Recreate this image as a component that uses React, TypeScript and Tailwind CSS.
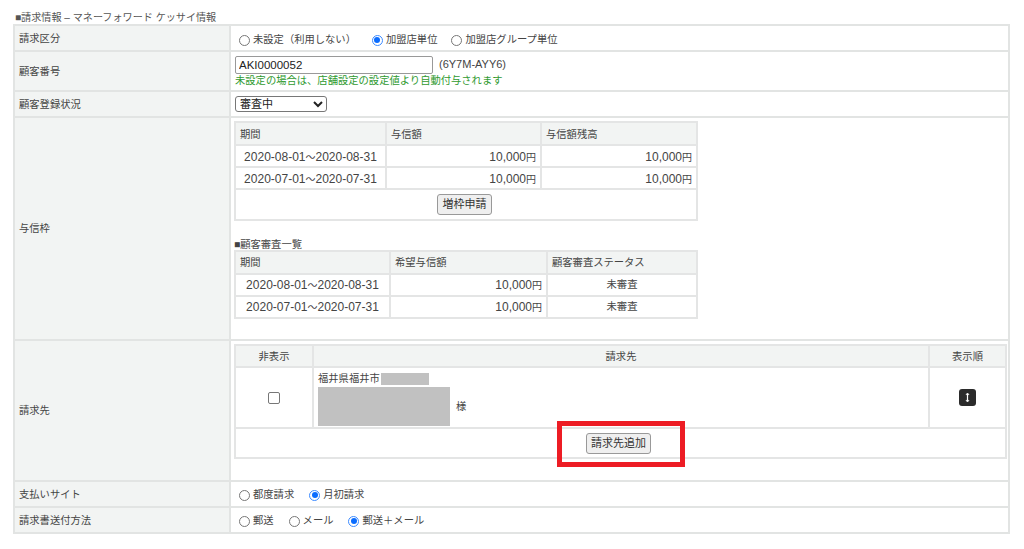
import type { ReactNode } from "react";

const font = "[font-family:'Liberation_Sans','Noto_Sans_CJK_JP',sans-serif]";

const Radio = ({ label, checked, className = "" }: { label: string; checked?: boolean; className?: string }) => (
  <span className={`inline-flex items-center ${className}`}>
    {checked ? (
      <span className="flex h-[11px] w-[11px] items-center justify-center rounded-full border-[1.5px] border-[#3d8bff] bg-white">
        <span className="h-[6px] w-[6px] rounded-full bg-[#0a6cff]" />
      </span>
    ) : (
      <span className="h-[11px] w-[11px] rounded-full border border-[#777] bg-white" />
    )}
    <span className="ml-[3px] leading-none">{label}</span>
  </span>
);

const Row = ({ label, height, children, pad = "pl-[8px]" }: { label: string; height: string; children: ReactNode; pad?: string }) => (
  <tr className={height}>
    <th className="border-2 border-[#e2e4e3] bg-[#f2f4f3] pl-[4px] pt-[2px] text-left align-middle font-normal">{label}</th>
    <td className={`border-2 border-[#e2e4e3] align-middle ${pad}`}>{children}</td>
  </tr>
);

const cell = "border-2 border-[#e4e5e5]";
const head = "border-2 border-[#e4e5e5] bg-[#f2f4f3] pt-[1px] font-normal";

const Btn = ({ label, className }: { label: string; className: string }) => (
  <button className={`rounded-[3px] border border-[#999] bg-[#efefef] text-[11px] leading-none text-[#333] ${className}`}>
    {label}
  </button>
);

const Period = ({ from, to }: { from: string; to: string }) => (
  <span className="text-[12px]">
    {from}
    <span className="text-[10px]">～</span>
    {to}
  </span>
);

const Yen = ({ value }: { value: string }) => (
  <span className="text-[12px]">
    {value}
    <span className="text-[10px]">円</span>
  </span>
);

const limits = [
  ["2020-08-01", "2020-08-31", "10,000", "10,000"],
  ["2020-07-01", "2020-07-31", "10,000", "10,000"],
];

const reviews = [
  ["2020-08-01", "2020-08-31", "10,000", "未審査"],
  ["2020-07-01", "2020-07-31", "10,000", "未審査"],
];

export default function App() {
  return (
    <div className={`relative h-[549px] w-[1024px] overflow-hidden bg-white pt-[12px] text-[10.3px] text-[#444] ${font}`}>
      <div className="ml-[15px] h-[12px] text-[10.1px] leading-[12px] text-[#555]">■請求情報 – マネーフォワード ケッサイ情報</div>
      <table className="ml-[13px] w-[997px] table-fixed border-collapse">
        <colgroup>
          <col className="w-[216px]" />
          <col />
        </colgroup>
        <tbody>
          <Row label="請求区分" height="h-[26px]">
            <div className="flex items-center pt-[4px]">
              <Radio label="未設定（利用しない）" />
              <Radio label="加盟店単位" checked className="ml-[16px]" />
              <Radio label="加盟店グループ単位" className="ml-[14px]" />
            </div>
          </Row>
          <Row label="顧客番号" height="h-[40px]" pad="pl-[4px]">
            <div className="flex items-center">
              <input
                readOnly
                value="AKI0000052"
                className="h-[18px] w-[198px] rounded-[2px] border border-[#999] bg-white px-[3px] text-[11.5px] text-[#222] outline-none"
              />
              <span className="ml-[6px] text-[11px]">(6Y7M-AYY6)</span>
            </div>
            <div className="mt-[1px] leading-[12px] text-[#2f9a2f]">未設定の場合は、店舗設定の設定値より自動付与されます</div>
          </Row>
          <Row label="顧客登録状況" height="h-[26px]" pad="pl-[4px]">
            <select className="block h-[16px] w-[92px] rounded-[3px] border border-[#777] bg-white pl-0 text-[11px] leading-none text-[#222]">
              <option>審査中</option>
            </select>
          </Row>
          <tr className="h-[223px]">
            <th className="border-2 border-[#e2e4e3] bg-[#f2f4f3] pl-[4px] text-left align-middle font-normal">与信枠</th>
            <td className="border-2 border-[#e2e4e3] pl-[3px] align-top">
              <table className="mt-[3px] w-[464px] table-fixed border-collapse">
                <colgroup>
                  <col className="w-[151px]" />
                  <col className="w-[155px]" />
                  <col />
                </colgroup>
                <thead>
                  <tr className="h-[23px]">
                    <th className={`${head} pl-[4px] !pt-[3px] text-left`}>期間</th>
                    <th className={`${head} pl-[4px] !pt-[3px] text-left`}>与信額</th>
                    <th className={`${head} pl-[4px] !pt-[3px] text-left`}>与信額残高</th>
                  </tr>
                </thead>
                <tbody>
                  {limits.map((r) => (
                    <tr key={r[0]} className="h-[22px]">
                      <td className={`${cell} pt-[2px] text-center`}>
                        <Period from={r[0]} to={r[1]} />
                      </td>
                      <td className={`${cell} pr-[4px] pt-[2px] text-right`}>
                        <Yen value={r[2]} />
                      </td>
                      <td className={`${cell} pr-[4px] pt-[2px] text-right`}>
                        <Yen value={r[3]} />
                      </td>
                    </tr>
                  ))}
                  <tr className="h-[31px]">
                    <td colSpan={3} className={`${cell} text-center`}>
                      <Btn label="増枠申請" className="mr-[3px] h-[21px] w-[55px]" />
                    </td>
                  </tr>
                </tbody>
              </table>
              <div className="mt-[17px] h-[12px] leading-[14px]">■顧客審査一覧</div>
              <table className="w-[464px] table-fixed border-collapse">
                <colgroup>
                  <col className="w-[155px]" />
                  <col className="w-[157px]" />
                  <col />
                </colgroup>
                <thead>
                  <tr className="h-[23px]">
                    <th className={`${head} pl-[4px] text-left`}>期間</th>
                    <th className={`${head} pl-[4px] text-left`}>希望与信額</th>
                    <th className={`${head} pl-[4px] text-left`}>顧客審査ステータス</th>
                  </tr>
                </thead>
                <tbody>
                  {reviews.map((r) => (
                    <tr key={r[0]} className="h-[22px]">
                      <td className={`${cell} text-center`}>
                        <Period from={r[0]} to={r[1]} />
                      </td>
                      <td className={`${cell} pr-[4px] text-right`}>
                        <Yen value={r[2]} />
                      </td>
                      <td className={`${cell} text-center`}>{r[3]}</td>
                    </tr>
                  ))}
                </tbody>
              </table>
            </td>
          </tr>
          <tr className="h-[141px]">
            <th className="border-2 border-[#e2e4e3] bg-[#f2f4f3] pl-[4px] text-left align-middle font-normal">請求先</th>
            <td className="border-2 border-[#e2e4e3] pl-[3px] align-top">
              <table className="mt-[3px] w-[773px] table-fixed border-collapse">
                <colgroup>
                  <col className="w-[78px]" />
                  <col />
                  <col className="w-[77px]" />
                </colgroup>
                <thead>
                  <tr className="h-[22px]">
                    <th className={`${head} text-center`}>非表示</th>
                    <th className={`${head} text-center`}>請求先</th>
                    <th className={`${head} text-center`}>表示順</th>
                  </tr>
                </thead>
                <tbody>
                  <tr className="h-[61px]">
                    <td className={`${cell} text-center`}>
                      <span className="inline-block h-[12px] w-[12px] rounded-[2px] border border-[#777] bg-white align-middle" />
                    </td>
                    <td className={`${cell} pl-[4px] pt-[4px]`}>
                      <div className="flex h-[12px] items-center leading-none">
                        福井県福井市
                        <span className="ml-[1px] h-[12px] w-[48px] bg-[#c1c1c1]" />
                      </div>
                      <div className="mt-[2px] flex items-center">
                        <span className="h-[39px] w-[132px] bg-[#c1c1c1]" />
                        <span className="ml-[6px]">様</span>
                      </div>
                    </td>
                    <td className={`${cell} text-center`}>
                      <span className="inline-flex h-[17px] w-[17px] items-center justify-center rounded-[3px] bg-[#2b2b2b] align-middle">
                        <svg width="7" height="11" viewBox="0 0 7 11" fill="#fff" stroke="#fff" strokeWidth="1.2">
                          <path d="M3.5 2V9" />
                          <path d="M2 2.6L3.5 1L5 2.6ZM2 8.4L3.5 10L5 8.4Z" strokeWidth="0.6" />
                        </svg>
                      </span>
                    </td>
                  </tr>
                  <tr className="h-[30px]">
                    <td colSpan={3} className={`${cell} text-center`}>
                      <Btn label="請求先追加" className="mr-[4px] h-[21px] w-[65px]" />
                    </td>
                  </tr>
                </tbody>
              </table>
            </td>
          </tr>
          <Row label="支払いサイト" height="h-[26px]">
            <div className="flex items-center pt-[2px]">
              <Radio label="都度請求" />
              <Radio label="月初請求" checked className="ml-[15px]" />
            </div>
          </Row>
          <Row label="請求書送付方法" height="h-[26px]">
            <div className="flex items-center pt-[2px]">
              <Radio label="郵送" />
              <Radio label="メール" className="ml-[15px]" />
              <Radio label="郵送＋メール" checked className="ml-[15px]" />
            </div>
          </Row>
        </tbody>
      </table>
      {/* red annotation around the add button */}
      <div className="absolute left-[557px] top-[421px] h-[46px] w-[128px] border-[5px] border-[#ed1c24]" />
    </div>
  );
}
